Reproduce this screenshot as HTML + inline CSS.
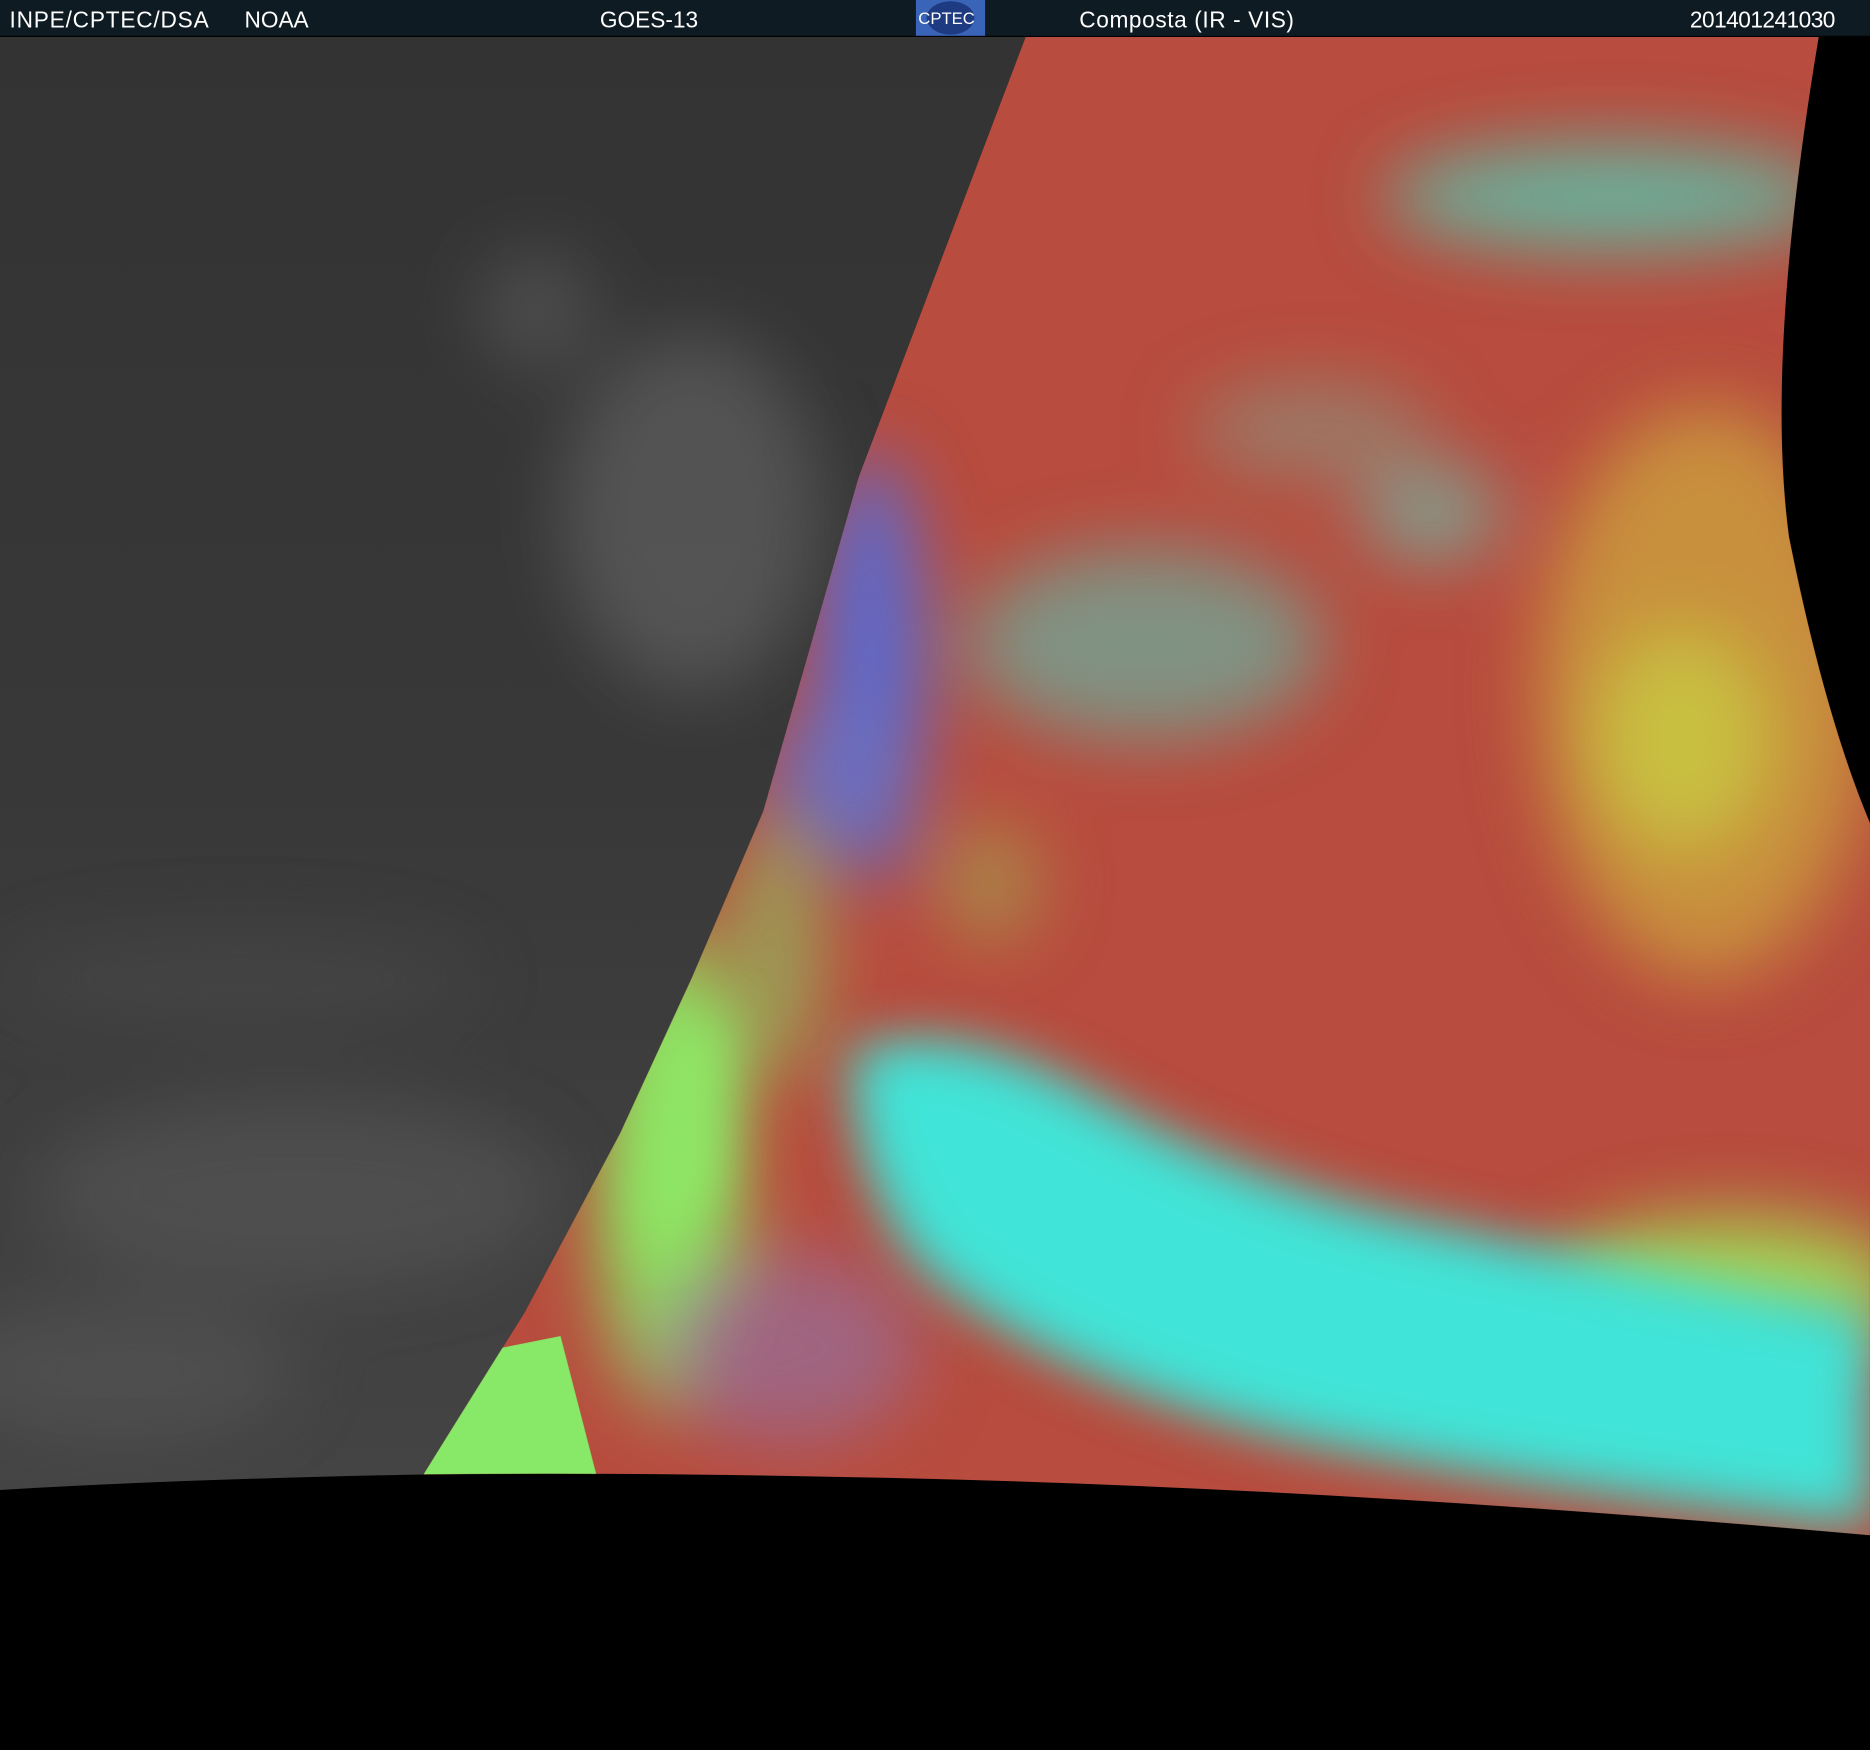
<!DOCTYPE html>
<html><head><meta charset="utf-8"><style>
html,body{margin:0;padding:0;background:#000;width:1870px;height:1750px;overflow:hidden}
svg{display:block}
</style></head><body>
<svg width="1870" height="1750" viewBox="0 0 1568 1467" preserveAspectRatio="none" xmlns="http://www.w3.org/2000/svg">
<defs>
<filter id="b1" x="-50%" y="-50%" width="200%" height="200%"><feGaussianBlur stdDeviation="30"/></filter>
<filter id="b2" x="-50%" y="-50%" width="200%" height="200%"><feGaussianBlur stdDeviation="22"/></filter>
<clipPath id="col"><path d="M860,31 L1525,31 Q1480,300 1500,450 Q1530,600 1568,690 L1568,1287 Q1100,1245 700,1238 Q500,1234 355,1236 L440,1100 L520,950 L580,820 L640,680 L720,400 L830,110 Z"/></clipPath>
<clipPath id="gry"><path d="M0,31 L860,31 L830,110 L720,400 L640,680 L580,820 L520,950 L440,1100 L355,1236 Q150,1240 0,1249 Z"/></clipPath>
<linearGradient id="gg" x1="0" y1="0" x2="0" y2="1"><stop offset="0" stop-color="#333"/><stop offset="0.5" stop-color="#383838"/><stop offset="1" stop-color="#444"/></linearGradient>
</defs>
<rect width="1568" height="1467" fill="#000"/>
<g clip-path="url(#gry)">
<rect x="0" y="31" width="870" height="1220" fill="url(#gg)"/>
<g filter="url(#b1)" opacity="0.35">
<ellipse cx="580" cy="430" rx="110" ry="150" fill="#8a8a8a"/>
<ellipse cx="450" cy="260" rx="50" ry="50" fill="#7a7a7a"/>
<ellipse cx="250" cy="1000" rx="220" ry="80" fill="#6a6a6a"/>
<ellipse cx="200" cy="820" rx="200" ry="40" fill="#555"/>
<ellipse cx="100" cy="1150" rx="150" ry="60" fill="#666"/>
</g>
</g>
<g clip-path="url(#col)">
<rect x="340" y="31" width="1240" height="1270" fill="#b84c3e"/>
<g filter="url(#b1)">
<ellipse cx="1430" cy="580" rx="140" ry="240" fill="#c8903c"/>
<ellipse cx="1410" cy="620" rx="70" ry="90" fill="#c8c040"/>
<ellipse cx="1350" cy="165" rx="190" ry="45" fill="#4ad8c0" opacity="0.7"/>
<ellipse cx="1200" cy="430" rx="60" ry="40" fill="#60d0c0" opacity="0.6"/>
<ellipse cx="730" cy="560" rx="45" ry="180" fill="#5a6ad0"/>
<ellipse cx="700" cy="650" rx="60" ry="60" fill="#6a70c0" opacity="0.8"/>
<ellipse cx="960" cy="540" rx="150" ry="80" fill="#6ab0a0" opacity="0.7"/>
<ellipse cx="1100" cy="360" rx="100" ry="40" fill="#80a890" opacity="0.5"/>
<ellipse cx="560" cy="980" rx="60" ry="200" fill="#8ee060"/>
<ellipse cx="650" cy="800" rx="40" ry="110" fill="#8ec060" opacity="0.7"/>
<ellipse cx="660" cy="1130" rx="110" ry="80" fill="#9a6a90" opacity="0.8"/>
<ellipse cx="1450" cy="1080" rx="150" ry="60" fill="#a8d050"/>
<ellipse cx="830" cy="740" rx="40" ry="50" fill="#a0b050" opacity="0.6"/>
</g>
<g filter="url(#b2)">
<path d="M715,880 Q800,850 920,920 Q1060,1000 1220,1030 Q1400,1070 1568,1100 L1568,1280 Q1300,1250 1100,1210 Q880,1160 770,1060 Q710,980 715,880 Z" fill="#40e4d8"/>
<path d="M560,860 L610,850 L600,1000 L540,1050 Z" fill="#8ee868"/>
</g>
<path d="M355,1236 L420,1130 L470,1120 L500,1236 Z" fill="#88e868"/>
</g>
<rect x="0" y="0" width="1568" height="31" fill="#0f1b23"/>
<rect x="0" y="30" width="1568" height="1" fill="#000"/>
<rect x="768" y="0" width="58" height="30" fill="#3a64b8"/>
<ellipse cx="797" cy="15" rx="20" ry="14" fill="#1e3a80"/>
<g font-family="Liberation Sans, sans-serif" font-size="19" fill="#fff">
<text x="8" y="23" textLength="167">INPE/CPTEC/DSA</text>
<text x="205" y="23">NOAA</text>
<text x="503" y="23">GOES-13</text>
<text x="770" y="20" font-size="14">CPTEC</text>
<text x="905" y="23" textLength="180">Composta (IR - VIS)</text>
<text x="1417" y="23" textLength="122">201401241030</text>
</g>
</svg>
</body></html>
